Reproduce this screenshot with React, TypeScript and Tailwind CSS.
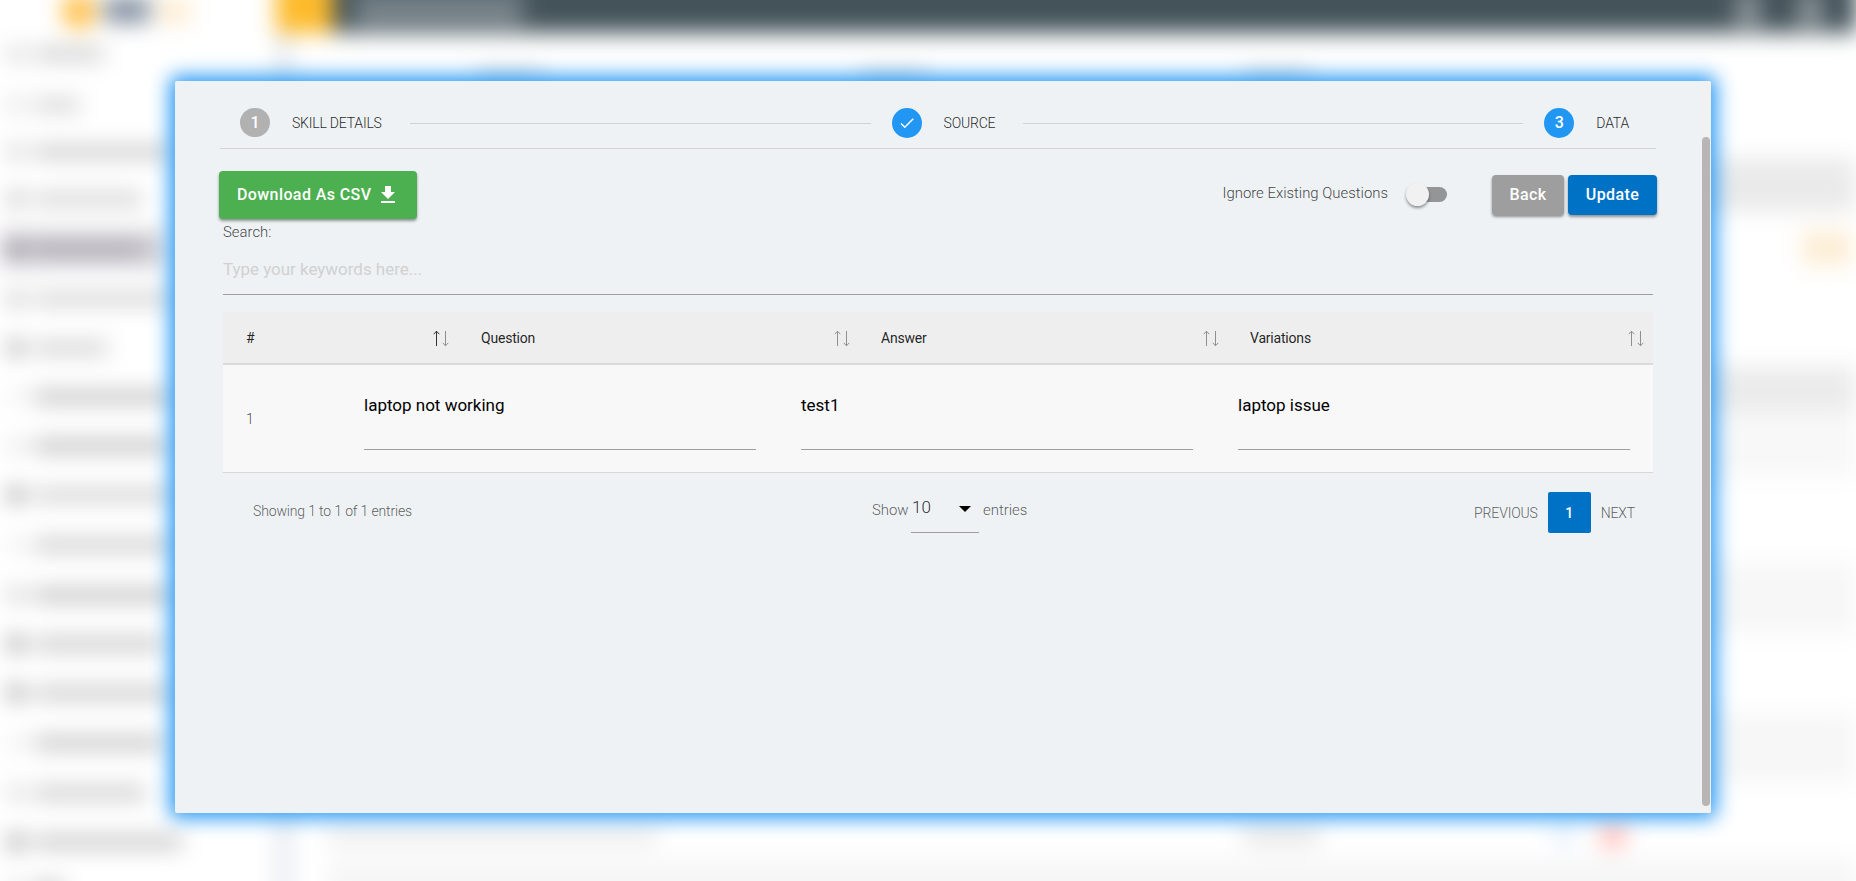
import { useState } from "react"
import type { ReactNode } from "react"
import { MdCheck, MdFileDownload } from "react-icons/md"

type Row = { id: number; question: string; answer: string; variations: string }

const ROWS: Row[] = [
  { id: 1, question: "laptop not working", answer: "test1", variations: "laptop issue" },
]

// Blurred sidebar entries: icon shade + label shade / width
const MENU = [
  { icon: "bg-[#cccccc]", label: "w-[70px] bg-[#c8c8c8]", row: "h-[51px]" },
  { icon: "bg-[#dadada]", label: "w-[46px] bg-[#cecece]", row: "h-[51px]" },
  { icon: "bg-[#c8c8c8]", label: "w-[140px] bg-[#c4c4c4]", row: "h-[44px]" },
  { icon: "bg-[#b4b4b4]", label: "w-[108px] bg-[#cccccc]", row: "h-[50px]" },
  { icon: "bg-[#8e8c94]", label: "w-[106px] bg-[#a9a6af]", row: "h-[50px]", active: true },
  { icon: "bg-[#b8b8b8]", label: "w-[140px] bg-[#cccccc]", row: "h-[49px]" },
  { icon: "bg-[#9a9a9a]", label: "w-[74px] bg-[#cacaca]", row: "h-[49px]" },
  { icon: "bg-[#ececec]", label: "w-[140px] bg-[#bababa]", row: "h-[49px]" },
  { icon: "bg-[#e0e0e0]", label: "w-[135px] bg-[#b8b8b8]", row: "h-[49px]" },
  { icon: "bg-[#8c8c8c]", label: "w-[140px] bg-[#cacaca]", row: "h-[50px]" },
  { icon: "bg-[#e8e8e8]", label: "w-[140px] bg-[#c4c4c4]", row: "h-[50px]" },
  { icon: "bg-[#c4c4c4]", label: "w-[140px] bg-[#b8b8b8]", row: "h-[49px]" },
  { icon: "bg-[#8c8c8c]", label: "w-[130px] bg-[#c0c0c0]", row: "h-[49px]" },
  { icon: "bg-[#8c8c8c]", label: "w-[140px] bg-[#c2c2c2]", row: "h-[50px]" },
  { icon: "bg-[#e8e8e8]", label: "w-[130px] bg-[#bcbcbc]", row: "h-[50px]" },
  { icon: "bg-[#d0d0d0]", label: "w-[112px] bg-[#c4c4c4]", row: "h-[49px]" },
  { icon: "bg-[#8c8c8c]", label: "w-[148px] bg-[#bebebe]", row: "h-[50px]" },
  { icon: "bg-[#dcdcdc]", label: "w-[30px] bg-[#bcbcbc]", row: "h-[44px]" },
]

function Backdrop() {
  return (
    <div className="flex h-[941px] w-full flex-col bg-white blur-[11px]">
      <div className="flex h-[63px] shrink-0">
        <div className="flex w-[276px] items-end gap-2 pl-[62px]">
          <span className="mb-1 h-[36px] w-[34px] rounded-full bg-[#ffc04a]" />
          <span className="mb-2.5 h-[26px] w-[46px] bg-[#8491a1]" />
          <span className="mb-2.5 h-[24px] w-[32px] bg-[#fdebce]" />
        </div>
        <div className="w-[57px] bg-[#fdbb2c]" />
        <div className="flex flex-1 items-end bg-[#44535a]">
          <span className="mb-1.5 ml-[22px] h-[34px] w-[168px] bg-[#78838a]" />
          <span className="mb-1.5 ml-auto h-[34px] w-[24px] bg-[#8f989c]" />
          <span className="mb-1.5 ml-[38px] mr-[34px] h-[34px] w-[24px] bg-[#8f989c]" />
        </div>
      </div>
      <div className="flex flex-1">
        <div className="-mt-[5px] w-[276px]">
          {MENU.map((item, i) => (
            <div key={i} className={`flex items-center ${item.row}`}>
              <div
                className={`flex h-[34px] items-center gap-2.5 pl-2 ${item.active ? "w-[164px] bg-[#cbc8cf]" : ""}`}
              >
                <span className={`h-4 w-4 rounded-full ${item.icon}`} />
                <span className={`h-[12px] ${item.label}`} />
              </div>
            </div>
          ))}
        </div>
        <div className="w-[16px] bg-[#e6eaf0]" />
        <div className="flex flex-1 flex-col pl-9">
          <div className="h-[34px]" />
          <div className="flex h-[20px] items-center gap-[320px] pl-[150px]">
            <span className="h-3 w-16 bg-[#cdd0d4]" />
            <span className="h-3 w-16 bg-[#cdd0d4]" />
            <span className="h-3 w-16 bg-[#cdd0d4]" />
          </div>
          <div className="mt-[71px] h-[54px] bg-[#eaeaea]" />
          <div className="mt-[18px] mr-1 h-[36px] w-[50px] self-end bg-[#fdeed6]" />
          <div className="mt-[100px] h-[46px] bg-[#ebebeb]" />
          <div className="h-[66px] bg-[#f8f8f8]" />
          <div className="mt-[84px] h-[72px] bg-[#f7f7f7]" />
          <div className="mt-[78px] h-[72px] bg-[#f7f7f7]" />
          <div className="mt-[41px] flex h-[20px] items-center blur-[4px]">
            <span className="h-[14px] w-[330px] bg-[#e6e6e6]" />
            <span className="ml-[585px] h-[14px] w-[76px] bg-[#dcdcdc]" />
            <span className="ml-[236px] h-[18px] w-[18px] rounded-full bg-[#d0e4fa]" />
            <span className="ml-[28px] h-[24px] w-[24px] rounded-full bg-[#ffaaa2]" />
          </div>
          <div className="mt-[14px] flex-1 bg-[#f6f6f6]" />
        </div>
      </div>
    </div>
  )
}

function Step({ badge, label, done = true, last = false }: { badge: ReactNode; label: string; done?: boolean; last?: boolean }) {
  return (
    <div className="flex items-center">
      <span
        className={`flex h-[29.5px] w-[30px] items-center justify-center rounded-full text-base font-medium text-white ${
          done ? "bg-[#2196f3]" : "mb-px bg-[#b1b1b1]"
        }`}
      >
        {badge}
      </span>
      <span
        className={`ml-[22px] text-sm font-light tracking-[-0.2px] text-black/87 ${last ? "mr-[27px]" : "mr-[28px]"}`}
      >
        {label}
      </span>
    </div>
  )
}

function SortIcon({ active = false }: { active?: boolean }) {
  return (
    <svg width="16" height="17" viewBox="0 0 16 17" fill="none" className="mt-0.5">
      <g stroke={active ? "#333" : "#8f8f8f"}>
        <path d="M3.5 16V1" />
        <path d="M0.7 4.2L3.5 1.2L6.3 4.2" />
      </g>
      <g stroke="#8f8f8f">
        <path d="M12.5 1V16" />
        <path d="M9.7 12.8L12.5 15.8L15.3 12.8" />
      </g>
    </svg>
  )
}

function HeaderCell({ label, width, active }: { label: string; width: string; active?: boolean }) {
  return (
    <div className={`flex items-center justify-between pr-[9px] ${width}`}>
      <span className="text-sm leading-5 tracking-[-0.2px] text-black/87">{label}</span>
      <SortIcon active={active} />
    </div>
  )
}

function CellInput({ value }: { value: string }) {
  return (
    <div className="h-[68px] w-[392px] border-b border-[#9e9e9e] pt-[11px] text-[17px] leading-6 text-black">
      {value}
    </div>
  )
}

export default function App() {
  const [ignoreExisting, setIgnoreExisting] = useState(false)

  return (
    <div className="relative h-[881px] w-full overflow-hidden bg-white font-[Roboto,sans-serif]">
      <div className="-mt-[30px]">
        <Backdrop />
      </div>

      {/* Modal */}
      <div className="absolute left-[175px] top-[81px] flex h-[732px] w-[1536px] overflow-hidden rounded-xs bg-[#eef2f5] shadow-[0_0_20px_5px_#2196f3]">
        <div className="flex w-[1527px] flex-col pl-[44px] pr-[45px]">
          {/* Stepper */}
          <div className="ml-px mr-px flex h-[68px] items-center border-b border-[#d4d4d4] pl-5 pt-[17px]">
            <Step badge="1" label="SKILL DETAILS" done={false} />
            <div className="h-px flex-1 bg-[#d0d3d6]" />
            <div className="w-[21px]" />
            <Step badge={<MdCheck size={18} />} label="SOURCE" />
            <div className="h-px w-[500px] bg-[#d0d3d6]" />
            <div className="w-[21px]" />
            <Step badge="3" label="DATA" last />
          </div>

          {/* Toolbar */}
          <div className="flex items-start pt-[22px]">
            <button className="flex h-12 w-[198px] items-center rounded bg-[#4caf50] pb-px pl-[18px] text-base font-medium tracking-[0.4px] text-white shadow-[0_2px_3px_rgba(0,0,0,0.4)]">
              Download As CSV
              <MdFileDownload size={24} className="ml-[5px]" />
            </button>
            <div className="ml-auto flex items-center pt-1">
              <span className="mb-1 text-[14.9px] font-light text-black/75">Ignore Existing Questions</span>
              <button
                onClick={() => setIgnoreExisting(!ignoreExisting)}
                className={`mb-0.5 ml-[19px] flex h-[15px] w-[40px] items-center rounded-full ${
                  ignoreExisting ? "justify-end bg-[#84c7c1]" : "bg-[#949597]"
                }`}
              >
                <span className="-ml-px h-[23px] w-[23px] shrink-0 rounded-full bg-[#f1f1f1] shadow-[0_2px_3px_rgba(0,0,0,0.4)]" />
              </button>
              <button className="ml-[45px] h-10 w-[72px] rounded bg-[#9e9e9e] text-base font-medium tracking-[0.4px] text-white shadow-[0_2px_3px_rgba(0,0,0,0.4)]">
                Back
              </button>
              <button className="ml-1 h-10 w-[89px] rounded bg-[#0072c6] text-base font-medium tracking-[0.4px] text-white shadow-[0_2px_3px_rgba(0,0,0,0.4)]">
                Update
              </button>
            </div>
          </div>

          <div className="ml-1 mr-1">
            {/* Search */}
            <div className="h-[23px] pt-[3px] text-[14.9px] font-light leading-5 text-black/75">Search:</div>
            <input
              placeholder="Type your keywords here..."
              className="block h-[53px] w-full border-b border-[#9e9e9e] pt-px text-[17px] tracking-[-0.03px] text-black outline-none placeholder:text-[#d1d1d1]"
            />

            {/* Table */}
            <div className="mt-[17px] flex h-[53px] border-b-2 border-[#dadada] bg-[#eeeeee] pl-[23px]">
              <HeaderCell label="#" width="w-[212px]" active />
              <HeaderCell label="Question" width="ml-[23px] w-[378px]" />
              <HeaderCell label="Answer" width="ml-[22px] w-[347px]" />
              <HeaderCell label="Variations" width="ml-[22px] w-[403px]" />
            </div>
            {ROWS.map((row) => (
              <div key={row.id} className="flex h-[108px] items-center border-b border-[#d8d8d8] bg-[#f8f8f8] pl-[23px]">
                <span className="w-[118px] text-sm font-light text-black/75">{row.id}</span>
                <div className="mb-[5px] flex gap-[45px]">
                  <CellInput value={row.question} />
                  <CellInput value={row.answer} />
                  <CellInput value={row.variations} />
                </div>
              </div>
            ))}

            {/* Footer */}
            <div className="flex items-start pl-[30px] pr-[18px] pt-[19px] text-sm font-light tracking-[-0.15px] text-black/65">
              <div className="w-[619px] pt-[9px]">Showing 1 to 1 of 1 entries</div>
              <div className="flex text-[14.9px] tracking-normal">
                <span className="w-[39px] pt-2 leading-5">Show</span>
                <div className="flex h-[41px] w-[68px] justify-between border-b border-[#9e9e9e] pl-px pr-[8px] pt-[3px] text-[17px] leading-6 text-black/85">
                  10
                  <svg width="12" height="6" viewBox="0 0 12 6" className="mt-[11px]">
                    <path d="M0 0H12L6 6Z" fill="#000" />
                  </svg>
                </div>
                <span className="ml-1 pt-2 leading-5">entries</span>
              </div>
              <div className="ml-auto flex h-[41px] items-center">
                <span>PREVIOUS</span>
                <span className="ml-[10px] flex h-[41px] w-[43px] items-center justify-center rounded-xs bg-[#0072c6] font-medium text-white">
                  1
                </span>
                <span className="ml-[10px]">NEXT</span>
              </div>
            </div>
          </div>
        </div>
        {/* Scrollbar */}
        <div className="w-[9px] bg-[#f1f1f1] pt-[56px]">
          <div className="h-[669px] w-2 rounded bg-[#bab5b5]" />
        </div>
      </div>
    </div>
  )
}
